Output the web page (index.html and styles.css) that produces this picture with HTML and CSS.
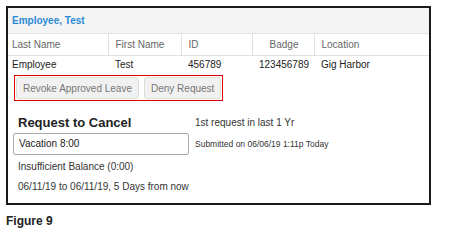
FILE: index.html
```html
<!DOCTYPE html>
<html lang="en">
<head>
    <meta charset="UTF-8">
    <title>Figure 9</title>
    <link rel="stylesheet" href="styles.css">
</head>
<body>
    <div class="panel">
        <div class="panel-title">Employee, Test</div>

        <table class="emp-table">
            <colgroup>
                <col class="c1">
                <col class="c2">
                <col class="c3">
                <col class="c4">
                <col>
            </colgroup>
            <tr>
                <th>Last Name</th>
                <th>First Name</th>
                <th>ID</th>
                <th class="num head-num">Badge</th>
                <th>Location</th>
            </tr>
            <tr>
                <td>Employee</td>
                <td>Test</td>
                <td>456789</td>
                <td class="num">123456789</td>
                <td>Gig Harbor</td>
            </tr>
        </table>

        <!-- action buttons -->
        <div class="actions">
            <button class="btn">Revoke Approved Leave</button>
            <button class="btn">Deny Request</button>
        </div>

        <div class="request">
            <h2>Request to Cancel</h2>
            <div class="side">1st request in last 1 Yr</div>
            <div class="leave-box">Vacation 8:00</div>
            <div class="side small">Submitted on 06/06/19 1:11p Today</div>
            <div class="line">Insufficient Balance (0:00)</div>
            <div class="line">06/11/19 to 06/11/19, 5 Days from now</div>
        </div>
    </div>

    <p class="caption">Figure 9</p>
</body>
</html>
```

FILE: styles.css
```css
/* Reset */
* {
    margin: 0;
    padding: 0;
    box-sizing: border-box;
}

body {
    font-family: "Liberation Sans", Arial, sans-serif;
    font-size: 10px;
    color: #222;
    background: #fff;
    padding: 6px;
}

/* Panel */
.panel {
    width: 425px;
    height: 199px;
    border: 2px solid #1a1a1a;
}

.panel-title {
    background: #f4f4f4;
    color: #2b8ad6;
    font-weight: bold;
    height: 26px;
    line-height: 26px;
    padding-left: 4px;
    border-bottom: 1px solid #e2e2e2;
}

/* Table */
.emp-table {
    width: 100%;
    border-collapse: collapse;
    table-layout: fixed;
}

.c1 { width: 100px; }
.c2 { width: 73px; }
.c3 { width: 71px; }
.c4 { width: 62px; }

.emp-table th {
    font-weight: normal;
    color: #666;
    text-align: left;
    height: 21px;
    padding: 0 6px 0 7px;
    border-left: 1px solid #e0e0e0;
    border-bottom: 1px solid #e0e0e0;
}

.emp-table th:first-child {
    border-left: none;
}

.emp-table td {
    height: 18px;
    padding: 0 6px 0 7px;
    color: #222;
}

.emp-table th:first-child,
.emp-table td:first-child {
    padding-left: 4px;
}

.emp-table .num {
    text-align: right;
    padding-right: 6px;
}

.emp-table .head-num {
    padding-right: 15px;
}

/* Buttons */
.actions {
    display: inline-flex;
    gap: 5px;
    margin: 2px 0 0 6px;
    padding: 1px;
    border: 1px solid #e00000;
}

.btn {
    font-family: inherit;
    font-size: 10px;
    color: #777;
    background: #f1f1f1;
    border: 1px solid #ddd;
    border-radius: 3px;
    height: 22px;
    padding: 0 6px;
}

/* Request details */
.request {
    display: grid;
    grid-template-columns: 176px 1fr;
    column-gap: 6px;
    padding: 12px 0 0 5px;
    align-items: center;
}

.request h2 {
    font-size: 13px;
    padding-left: 5px;
    height: 19px;
    line-height: 19px;
}

.side {
    color: #333;
}

.small {
    font-size: 8.5px;
}

.leave-box {
    border: 1px solid #aaa;
    border-radius: 2px;
    height: 22px;
    line-height: 20px;
    padding-left: 5px;
    margin-top: 1px;
}

.line {
    grid-column: 1 / 3;
    padding-left: 5px;
    margin-top: 4px;
    height: 15px;
    line-height: 15px;
    color: #333;
}

.line + .line {
    margin-top: 5px;
}

.caption {
    font-weight: bold;
    font-size: 12px;
    margin-top: 9px;
}
```
